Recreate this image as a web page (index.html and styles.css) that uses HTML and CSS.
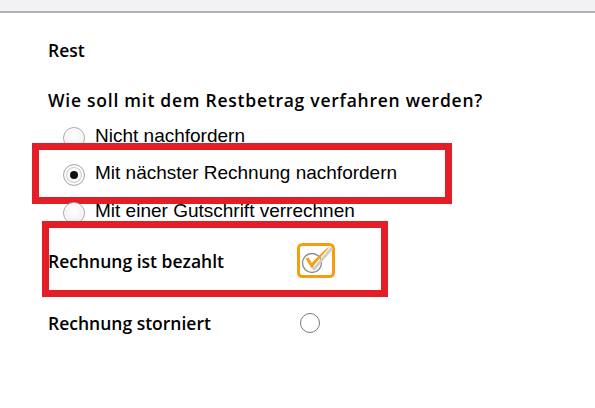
FILE: index.html
```html
<!DOCTYPE html>
<html lang="de">
<head>
<meta charset="utf-8">
<title>Rest</title>
<link rel="stylesheet" href="styles.css">
</head>
<body>
<div class="topbar"></div>
<main class="content">
  <div class="section-title">Rest</div>
  <div class="question">Wie soll mit dem Restbetrag verfahren werden?</div>
  <ul class="radio-list">
    <li class="radio-row"><span class="radio"></span><span class="radio-label">Nicht nachfordern</span></li>
    <li class="radio-row"><span class="radio checked"></span><span class="radio-label">Mit nächster Rechnung nachfordern</span><span class="mark mark-radio"></span></li>
    <li class="radio-row"><span class="radio"></span><span class="radio-label">Mit einer Gutschrift verrechnen</span></li>
  </ul>
  <div class="field-row paid">
    <span class="field-label">Rechnung ist bezahlt</span>
    <span class="check-toggle">
      <svg width="38" height="36" viewBox="0 0 38 36">
        <rect x="1.5" y="1.5" width="35" height="32" rx="4" fill="#fff" stroke="#f59d0e" stroke-width="3"/>
        <circle cx="15" cy="20" r="9.5" fill="#fff" stroke="#8a8a8a" stroke-width="1.3"/>
        <path d="M9.5 16 L15 25 L33 4" fill="none" stroke="#cfcfcf" stroke-width="3" stroke-linejoin="round" transform="translate(2 1)"/>
        <path d="M8.5 15.5 L14.5 25 L33 3.5 L29 6 L14.5 20 L11.5 14.5 Z" fill="#f7a10d"/>
      </svg>
    </span>
    <span class="mark mark-paid"></span>
  </div>
  <div class="field-row">
    <span class="field-label">Rechnung storniert</span>
    <span class="toggle-off"><span class="circle"></span></span>
  </div>
</main>
</body>
</html>
```
FILE: styles.css
```css
html, body {
  margin: 0;
  padding: 0;
  background: #ffffff;
}
body {
  width: 595px;
  height: 408px;
  overflow: hidden;
  font-family: "Open Sans", "Noto Sans", sans-serif;
  color: #000;
}
.topbar {
  height: 11px;
  background: #f2f2f4;
  border-bottom: 2px solid #b3b3b3;
}
.content {
  padding: 26px 0 0 48px;
}
.section-title,
.question,
.field-label {
  font-size: 17.5px;
  font-weight: 600;
  line-height: 22px;
}
.question {
  margin-top: 28px;
  letter-spacing: 0.75px;
}
.radio-list {
  list-style: none;
  margin: 6px 0 0 0;
  padding: 0 0 0 15px;
}
.radio-row {
  position: relative;
  height: 37.5px;
  display: flex;
  align-items: center;
  gap: 10px;
  font-family: "Liberation Sans", Arial, sans-serif;
  font-size: 19px;
}
.radio {
  width: 20px;
  height: 20px;
  border-radius: 50%;
  border: 1px solid #a9a9a9;
  background: radial-gradient(circle at 50% 40%, #ffffff 0%, #f4f4f4 55%, #d8d8d8 100%);
  box-shadow: inset 0 0 0 1px #ffffff;
  flex: none;
  position: relative;
  top: 2px;
}
.radio.checked::after {
  content: "";
  position: absolute;
  left: 6px;
  top: 6px;
  width: 8px;
  height: 8px;
  border-radius: 50%;
  background: #111;
}
.radio.checked {
  box-shadow: inset 0 0 0 2px #ffffff, inset 0 0 0 3px #cfcfcf;
}
.mark {
  position: absolute;
  border: 7px solid #e41e26;
  box-sizing: border-box;
  pointer-events: none;
}
.mark-radio {
  left: -31px;
  top: -12px;
  width: 420px;
  height: 61px;
}
.field-row {
  position: relative;
  display: flex;
  align-items: center;
  height: 62px;
}
.field-label {
  width: 249px;
  flex: none;
}
.check-toggle {
  display: flex;
  width: 38px;
  height: 36px;
}
.mark-paid {
  left: -6px;
  top: -9px;
  width: 346px;
  height: 76px;
}
.toggle-off {
  display: flex;
  width: 36px;
  justify-content: flex-start;
  padding-left: 3px;
}
.toggle-off .circle {
  width: 18px;
  height: 18px;
  border-radius: 50%;
  border: 1.5px solid #7a7a7a;
  background: #fff;
}
```
